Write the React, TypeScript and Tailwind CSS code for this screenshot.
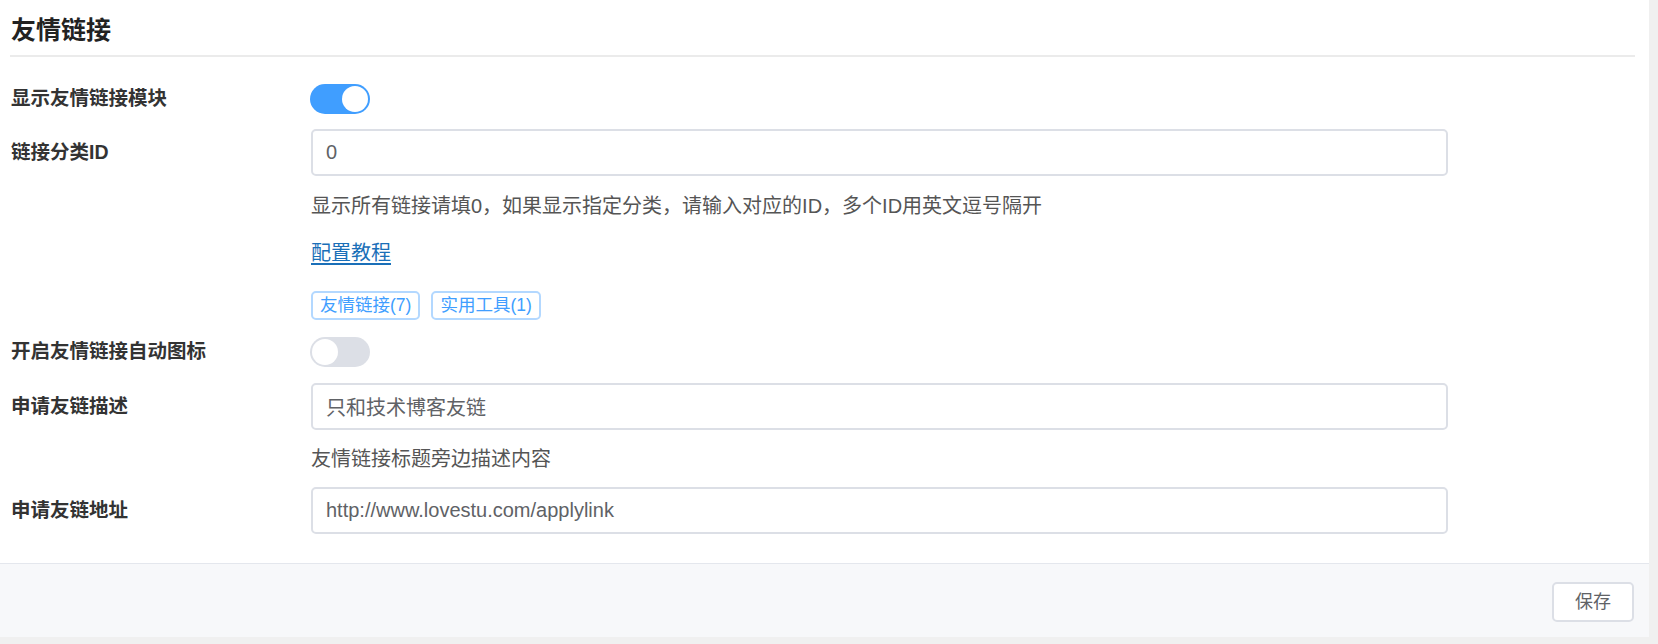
import React, { useState } from 'react';

const Switch: React.FC<{ on: boolean; onChange: () => void }> = ({ on, onChange }) => (
  <button
    type="button"
    onClick={onChange}
    className={`relative h-[30px] w-[60px] rounded-full transition-colors ${on ? 'bg-[#409eff]' : 'bg-[#dcdfe6]'}`}
  >
    <span
      className={`absolute top-[2px] h-[26px] w-[26px] rounded-full bg-white transition-all ${on ? 'left-[32px]' : 'left-[2px]'}`}
    />
  </button>
);

const Label: React.FC<{ children: React.ReactNode; h: string }> = ({ children, h }) => (
  <div className={`flex items-center pl-[11px] font-bold text-[19.5px] text-[#333] ${h}`}>{children}</div>
);

const TextInput: React.FC<{ value: string }> = ({ value }) => (
  <input
    defaultValue={value}
    className="h-[47px] w-[1137px] rounded-[5px] border-2 border-[#dcdfe6] bg-white px-[13px] text-[20px] text-[#606266] outline-none focus:border-[#409eff]"
  />
);

export default function App() {
  const [showLinks, setShowLinks] = useState(true);
  const [autoIcon, setAutoIcon] = useState(false);

  return (
    <div
      className="flex h-[644px] w-full bg-[#f0f0f0]"
      style={{ fontFamily: '"Liberation Sans", "Noto Sans CJK SC", sans-serif' }}
    >
      <div className="flex h-[637px] w-[1649px] flex-col bg-white">
        <div className="pl-[10px] pr-[14px] pt-[12px]">
          <h2 className="h-[36px] pl-[1px] text-[25px] font-bold leading-[36px] text-[#222]">友情链接</h2>
          <div className="mt-[7px] h-[2px] bg-[#ebebeb]" />
        </div>

        <div className="mt-[27px] grid grid-cols-[310px_1fr]">
          <Label h="h-[30px]">显示友情链接模块</Label>
          <div className="flex h-[30px] items-center">
            <Switch on={showLinks} onChange={() => setShowLinks(!showLinks)} />
          </div>

          <div className="mt-[15px]">
            <Label h="h-[47px]">链接分类ID</Label>
          </div>
          <div className="mt-[15px] flex flex-col items-start pl-[1px]">
            <TextInput value="0" />
            <p className="mt-[15px] text-[20px] leading-[30px] text-[#555]">
              显示所有链接请填0，如果显示指定分类，请输入对应的ID，多个ID用英文逗号隔开
            </p>
            <a href="#" className="mt-[17px] text-[20px] leading-[30px] text-[#1a6fb8] underline underline-offset-[3px]">
              配置教程
            </a>
            <div className="mt-[23px] flex gap-[11px]">
              {['友情链接(7)', '实用工具(1)'].map((t) => (
                <span
                  key={t}
                  className="flex h-[29px] items-center rounded-[5px] border-2 border-[#b3d8ff] bg-white px-[7px] text-[17.5px] text-[#409eff]"
                >
                  {t}
                </span>
              ))}
            </div>
          </div>

          <div className="mt-[17px]">
            <Label h="h-[30px]">开启友情链接自动图标</Label>
          </div>
          <div className="mt-[17px] flex h-[30px] items-center">
            <Switch on={autoIcon} onChange={() => setAutoIcon(!autoIcon)} />
          </div>

          <div className="mt-[16px]">
            <Label h="h-[47px]">申请友链描述</Label>
          </div>
          <div className="mt-[16px] flex flex-col items-start pl-[1px]">
            <TextInput value="只和技术博客友链" />
            <p className="mt-[14px] text-[20px] leading-[30px] text-[#555]">友情链接标题旁边描述内容</p>
          </div>

          <div className="mt-[13px]">
            <Label h="h-[47px]">申请友链地址</Label>
          </div>
          <div className="mt-[13px] pl-[1px]">
            <TextInput value="http://www.lovestu.com/applylink" />
          </div>
        </div>

        <div className="mt-auto flex h-[74px] justify-end border-t border-[#e4e7ed] bg-[#f7f8fa] pr-[15px] pt-[18px]">
          <button
            type="button"
            className="h-[40px] w-[82px] rounded-[5px] border-2 border-[#dcdfe6] bg-white text-[18px] text-[#606266]"
          >
            保存
          </button>
        </div>
      </div>
    </div>
  );
}
